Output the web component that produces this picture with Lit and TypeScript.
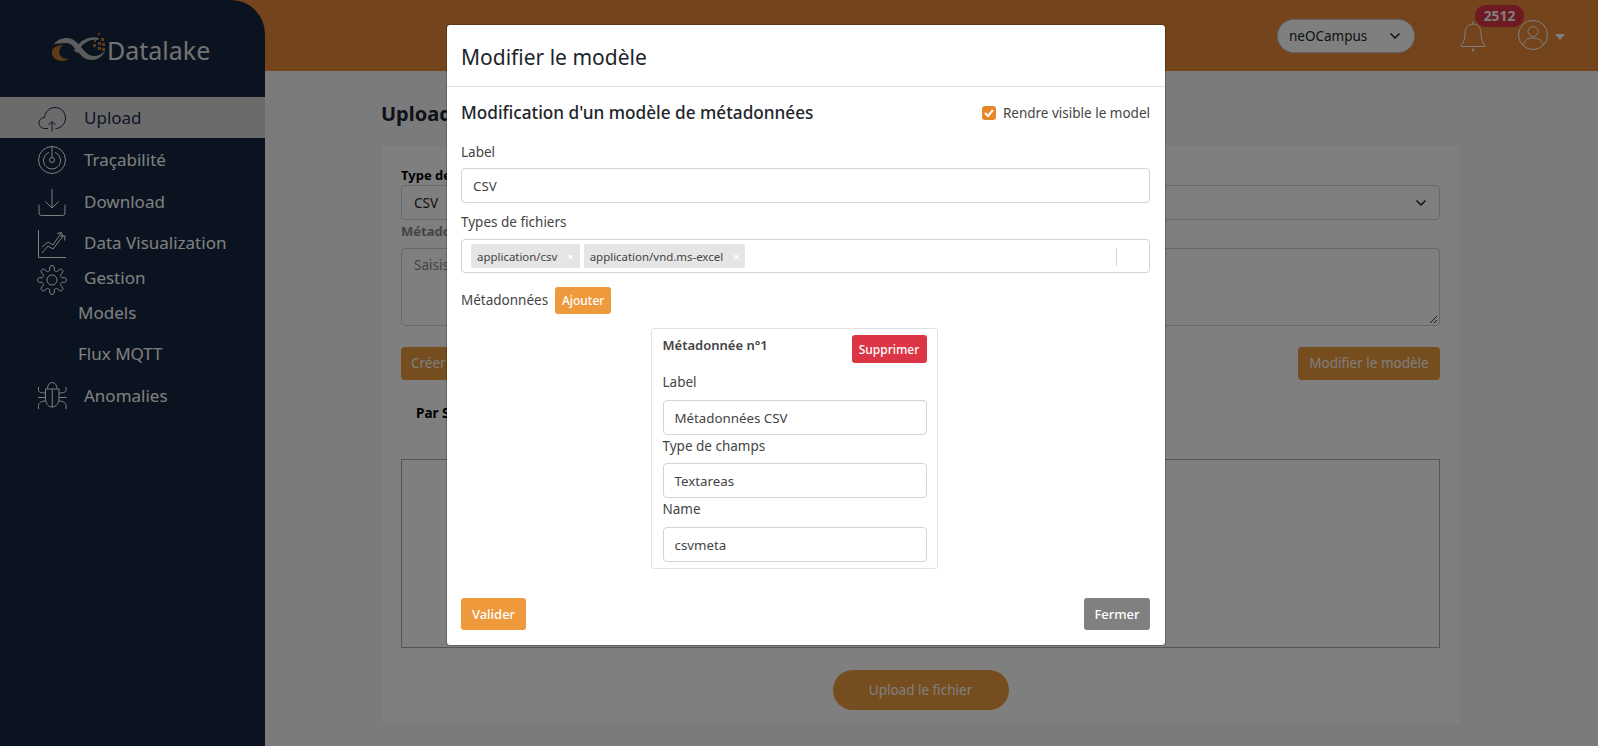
import { LitElement, html, css, svg } from "lit";
import { customElement } from "lit/decorators.js";

function gearPath(cx: number, cy: number, ro: number, ri: number, n: number) {
  const pts: string[] = [];
  for (let i = 0; i < n; i++) {
    const a = (i / n) * Math.PI * 2 - Math.PI / 2;
    const w = (Math.PI * 2) / n;
    const p = (r: number, t: number) =>
      `${(cx + r * Math.cos(t)).toFixed(2)} ${(cy + r * Math.sin(t)).toFixed(2)}`;
    pts.push(`${i ? "L" : "M"}${p(ri, a - w * 0.3)}`);
    pts.push(`L${p(ro, a - w * 0.2)}`);
    pts.push(`A2.5 2.500 0 0 1 ${p(ro, a + w * 0.2)}`);
    pts.push(`L${p(ri, a + w * 0.3)}`);
    pts.push(`A2 2 0 0 0 ${p(ri, a + w * 0.7)}`);
  }
  return pts.join(" ") + "Z";
}

const icons: Record<string, unknown> = {
  upload: svg`<path d="M7 24.500H6.500A5.500 5.500 0 0 1 1 19a5.500 5.500 0 0 1 5.500-5.500c.4-5.500 5-10 10.500-10 6 0 10.500 4.800 10.500 10.500S23 24.500 17.500 24.500"/><path d="M14 27.500V18M10.500 21l3.500-3.500 3.500 3.500"/><path d="M7 24.500h3"/>`,
  radar: svg`<circle cx="14" cy="14" r="13.500"/><path d="M11 6.500a8.500 8.500 0 1 0 6 0"/><circle cx="14" cy="14" r="2.500"/><path d="M14 .5V11.500"/>`,
  download: svg`<path d="M1 16.500V25a2.500 2.500 0 0 0 2.500 2.500h21A2.500 2.500 0 0 0 27 25v-8.500"/><path d="M14 1V20M7.500 13.500 14 20l6.500-6.500"/>`,
  chart: svg`<path d="M.5 0V27.500H28"/><path d="M4 23l6-7 5 3 10-13"/><path d="M4 17l6-5 5 3 8-12"/><path d="M19 3.500 23.500 2.500 25 7M22 6h5l-.5 4.500"/>`,
  gear: svg`<path d="${gearPath(14, 14, 13.5, 10.2, 8)}"/><circle cx="14" cy="14" r="5"/>`,
  bug: svg`<path d="M9.500 6.500a4.750 6 0 0 1 9.500 0"/><path d="M7.500 7h13.500v9c0 5.500-3 9-6.750 9S7.500 21.500 7.500 16z"/><path d="M14.250 7V25"/><path d="M.5 5v3c0 2 2 3 7 3M28 5v3c0 2-2 3-7 3M0 15.500h7.500M28.500 15.500H21M.5 27v-3.500c0-2.500 3-4.500 7-4.500M28 27v-3.500c0-2.500-3-4.500-7-4.500"/>`,
};

const nav = [
  { t: "Upload", i: "upload", h: 41, on: true },
  { t: "Traçabilité", i: "radar", h: 43 },
  { t: "Download", i: "download", h: 41 },
  { t: "Data Visualization", i: "chart", h: 41, k: "low1" },
  { t: "Gestion", i: "gear", h: 29, k: "low2" },
  { t: "Models", h: 41, sub: true },
  { t: "Flux MQTT", h: 42, sub: true },
  { t: "Anomalies", i: "bug", h: 42 },
];

const chev = html`<svg class="chev" viewBox="0 0 12 8"><path d="M1.500 1.500 6 6l4.500-4.500"/></svg>`;

@customElement("app-root")
export class AppRoot extends LitElement {
  static styles = css`
    :host {
      display: block;
      width: 1598px;
      height: 746px;
      position: relative;
      overflow: hidden;
      font-family: "Noto Sans", "Open Sans", sans-serif;
      background: #f6f6f6;
      color: #212529;
    }
    * { box-sizing: border-box; }
    .app { display: flex; height: 746px; }
    .sidecol { width: 265px; flex: none; background: #e8883a; }
    .side {
      height: 100%;
      background: #14263f;
      border-top-right-radius: 34px;
      color: #fff;
      padding-top: 28px;
    }
    .logo { display: flex; align-items: center; height: 40px; padding-left: 48px; margin-bottom: 29px; }
    .logo svg { width: 58px; height: 40px; flex: none; }
    .logo span { font-size: 25px; color: #e4e4e4; line-height: 39px; margin: 4px 0 0 1px; }
    .nav { display: flex; flex-direction: column; }
    .row { display: flex; align-items: center; padding-left: 38px; font-size: 17px; color: #fff; }
    .row span { margin-bottom: 1px; }
    .row.on { background: #d6d6d6; color: #1b2c4d; }
    .row.sub { padding-left: 78px; }
    .row svg { width: 28px; height: 28px; flex: none; margin-right: 18px; fill: none; stroke: currentColor; stroke-width: 1; overflow: visible; }
    .row.low1 svg { margin-top: 3px; }
    .row.low2 svg { margin-top: 4px; }
    .main { flex: 1; display: flex; flex-direction: column; min-width: 0; }
    .top {
      height: 71px;
      background: #e8883a;
      flex: none;
      display: flex;
      align-items: center;
      justify-content: flex-end;
      padding-right: 33px;
    }
    .org {
      width: 138px;
      height: 34px;
      border-radius: 17px;
      border: 1px solid #c8c8c8;
      background: #fff;
      display: flex;
      align-items: center;
      justify-content: space-between;
      padding: 0 13px 0 11px;
      font-size: 13.500px;
      color: #212529;
      margin-right: 45px;
    }
    .chev { width: 12px; height: 8px; fill: none; stroke: #212529; stroke-width: 1.500; flex: none; }
    .bell { position: relative; width: 26px; height: 34px; margin-right: 32px; }
    .bell svg { width: 26px; height: 34px; fill: none; stroke: #fff; stroke-width: 1; display: block; }
    .badge {
      position: absolute;
      left: 15px;
      top: -14px;
      width: 49px;
      height: 22px;
      border-radius: 11px;
      background: #dc3545;
      color: #fff;
      font-size: 13.800px;
      font-weight: 700;
      text-align: center;
      line-height: 21px;
    }
    .user { display: flex; align-items: center; gap: 7px; margin-top: -2px; }
    .user svg { width: 30px; height: 30px; fill: none; stroke: #fff; stroke-width: 1; }
    .caret { width: 0; height: 0; border: 5px solid transparent; border-top: 6px solid #fff; border-bottom: 0; margin-top: 5px; }
    .content { flex: 1; padding: 29px 138px 22px 117px; display: flex; flex-direction: column; }
    h1 { margin: 0 0 19px -1px; font-size: 20px; font-weight: 700; line-height: 27px; height: 27px; color: #1a2233; }
    .panel { background: #fff; flex: 1; padding: 20px 20px 0 19px; display: flex; flex-direction: column; }
    .flabel { font-size: 13px; font-weight: 700; line-height: 18px; height: 18px; color: #000; margin-bottom: 1px; }
    .flabel.muted { color: #888; margin: 2px 0 0; height: 18px; }
    .sel {
      height: 35px;
      border: 1px solid #ced4da;
      border-radius: 4px;
      display: flex;
      align-items: center;
      justify-content: space-between;
      padding: 0 12px;
      font-size: 13.500px;
      flex: none;
    }
    .ta {
      height: 78px;
      flex: none;
      border: 1px solid #ced4da;
      border-radius: 4px;
      margin-top: 8px;
      padding: 7px 12px;
      font-size: 13.500px;
      color: #888;
      position: relative;
    }
    .grip { position: absolute; right: 1px; bottom: 1px; width: 9px; height: 9px; fill: none; stroke: #333; stroke-width: 1; }
    .acts { display: flex; justify-content: space-between; margin-top: 21px; }
    .pbtn { height: 33px; padding: 0 10px; background: #ea9a3c; color: #fff; border-radius: 4px; font-size: 13.500px; line-height: 33px; }
    .pbtn.right { width: 142px; text-align: center; padding: 0; }
    .par { font-size: 13.500px; font-weight: 700; color: #000; margin: 24px 0 0 15px; line-height: 18px; height: 18px; }
    .drop { height: 189px; border: 1px solid #aaa; margin-top: 37px; flex: none; }
    .send { align-self: center; margin-top: 22px; width: 176px; height: 40px; border-radius: 20px; background: #ea9a3c; color: #fff; font-size: 13.500px; text-align: center; line-height: 40px; }
    .overlay { position: absolute; inset: 0; background: rgba(0, 0, 0, 0.5); }
    .modal {
      position: absolute;
      left: 446px;
      top: 24px;
      width: 720px;
      height: 622px;
      background: #fff;
      border: 1px solid rgba(0, 0, 0, 0.2);
      border-radius: 4px;
      background-clip: padding-box;
      display: flex;
      flex-direction: column;
    }
    .mhead { height: 62px; flex: none; border-bottom: 1px solid #dee2e6; display: flex; align-items: center; padding: 2px 14px 0; font-size: 21px; line-height: 30px; font-weight: 400; }
    .mbody { padding: 0 15px 0 14px; flex: 1; display: flex; flex-direction: column; }
    .mtitle { display: flex; align-items: center; justify-content: space-between; height: 51px; flex: none; }
    .mtitle b { font-size: 17.200px; font-weight: 500; }
    .chk { display: flex; align-items: center; gap: 7px; font-size: 13.500px; color: #444; }
    .box { width: 14px; height: 14px; border-radius: 3px; background: #e8872a; display: flex; }
    .box svg { width: 14px; height: 14px; fill: none; stroke: #fff; stroke-width: 2; }
    .lab { font-size: 13.500px; line-height: 18px; color: #444; height: 18px; }
    .inp {
      border: 1px solid #ced4da;
      border-radius: 4px;
      height: 35px;
      display: flex;
      align-items: center;
      padding: 0 11px;
      font-size: 13.300px;
      color: #444;
      background: #fff;
      flex: none;
    }
    .inp.mt { margin-top: 7px; }
    .gap1 { margin-top: 10px; }
    .tags { padding: 0 9px; gap: 4px; position: relative; margin-top: 8px; height: 34px; }
    .tag { height: 24px; background: #e5e5e5; display: flex; align-items: center; padding: 0 6px; font-size: 11.450px; color: #444; border-radius: 2px; gap: 10px; }
    .tag i { font-style: normal; color: #fff; font-size: 11px; font-weight: 700; }
    .sep { position: absolute; left: 654px; top: 8px; width: 1px; height: 18px; background: #ced4da; }
    .mrow { display: flex; align-items: center; gap: 7px; margin-top: 13px; height: 28px; flex: none; }
    .bt { color: #fff; border-radius: 3px; font-size: 12px; font-weight: 500; display: flex; align-items: center; justify-content: center; }
    .add { width: 56px; height: 27px; background: #ee9a3c; }
    .card {
      align-self: center;
      width: 287px;
      height: 241px;
      flex: none;
      margin: 14px 23px 0 0;
      border: 1px solid #dee2e6;
      border-radius: 3px;
      padding: 6px 10px 0 11px;
      display: flex;
      flex-direction: column;
    }
    .chead { display: flex; justify-content: space-between; height: 36px; flex: none; }
    .chead b { font-size: 13px; font-weight: 600; line-height: 18px; margin-top: 1px; color: #444; }
    .del { width: 75px; height: 28px; background: #dc3545; }
    .clab { margin-top: 2px; }
    .clab2 { margin-top: 2px; }
    .card .inp { height: 35px; margin-top: 8px; }
    .card .inp.first, .card .inp.last { margin-top: 9px; }
    .mfoot { display: flex; justify-content: space-between; margin-top: 29px; }
    .mfoot .bt { height: 32px; font-size: 13px; }
    .val { width: 65px; background: #ee9a3c; }
    .clo { width: 66px; background: #808080; }
  `;

  render() {
    return html`
      <div class="app">
        <div class="sidecol">
          <aside class="side">
            <div class="logo">
              <svg viewBox="0 0 58 40">
                <path d="M4 23c-1 6 4 10 10 10 3 0 5-1 7-2-4 0-7-1-9-4-2-3 0-8 3-10-5 0-10 2-11 6z" fill="#b9772c"/>
                <path d="M6 16c3-4 8-6 13-6 6 0 10 4 14 9 4 5 8 9 13 9 4 0 8-2 11-5-2 5-7 9-13 9-6 0-10-3-14-8-4-5-7-9-12-9-5 0-9 1-12 1z" fill="#b8b8b8"/>
                <path d="M26 22c3-5 8-10 14-12 4-1 8-1 11 0l-1 2c-5-1-9 0-13 3-3 2-6 6-8 10z" fill="#b8b8b8"/>
                <g fill="#b9772c">
                  <rect x="50" y="5" width="2" height="2"/><rect x="46" y="12" width="2" height="2"/><rect x="53" y="10" width="3" height="3"/>
                  <rect x="50" y="14" width="3" height="3"/><rect x="45" y="16" width="3" height="3"/><rect x="54" y="15" width="3" height="3"/>
                  <rect x="50" y="19" width="3" height="3"/><rect x="54" y="20" width="3" height="3"/>
                </g>
              </svg>
              <span>Datalake</span>
            </div>
            <nav class="nav">
              ${nav.map(
                (n) => html`<div class="row ${n.on ? "on" : ""} ${n.sub ? "sub" : ""} ${n.k ?? ""}" style="height:${n.h}px">
                  ${n.i ? html`<svg viewBox="0 0 28 28">${icons[n.i]}</svg>` : ""}<span>${n.t}</span>
                </div>`
              )}
            </nav>
          </aside>
        </div>
        <div class="main">
          <header class="top">
            <div class="org"><span>neOCampus</span>${chev}</div>
            <div class="bell">
              <svg viewBox="0 0 26 34"><path d="M13 5c-5 0-8 4-8 9 0 6-1 9-4 12.500-.3.500 0 1 .5 1h23c.5 0 .8-.5.5-1C22 23 21 20 21 14c0-5-3-9-8-9zM13 5V2"/><circle cx="13" cy="31" r="1" fill="#fff"/></svg>
              <div class="badge">2512</div>
            </div>
            <div class="user">
              <svg viewBox="0 0 30 30"><circle cx="15" cy="15" r="14.500"/><circle cx="15" cy="11.500" r="5"/><path d="M5 25c1-5 5-7 10-7s9 2 10 7"/></svg>
              <div class="caret"></div>
            </div>
          </header>
          <div class="content">
            <h1>Upload</h1>
            <div class="panel">
              <div class="flabel">Type de fichier</div>
              <div class="sel"><span>CSV</span>${chev}</div>
              <div class="flabel muted">Métadonnées</div>
              <div class="ta">Saisissez
                <svg class="grip" viewBox="0 0 9 9"><path d="M1 8 8 1M5 8 8 5"/></svg>
              </div>
              <div class="acts"><div class="pbtn">Créer un modèle</div><div class="pbtn right">Modifier le modèle</div></div>
              <div class="par">Par Sélection</div>
              <div class="drop"></div>
              <div class="send">Upload le fichier</div>
            </div>
          </div>
        </div>
      </div>
      <div class="overlay"></div>
      <div class="modal">
        <div class="mhead">Modifier le modèle</div>
        <div class="mbody">
          <div class="mtitle">
            <b>Modification d'un modèle de métadonnées</b>
            <div class="chk">
              <span class="box"><svg viewBox="0 0 14 14"><path d="M3 7l3 3 5-6"/></svg></span>
              Rendre visible le model
            </div>
          </div>
          <div class="lab" style="margin-top:5px">Label</div>
          <div class="inp mt">CSV</div>
          <div class="lab gap1">Types de fichiers</div>
          <div class="inp tags">
            <div class="tag">application/csv<i>×</i></div>
            <div class="tag">application/vnd.ms-excel<i>×</i></div>
            <div class="sep"></div>
          </div>
          <div class="mrow"><span class="lab">Métadonnées</span><div class="bt add">Ajouter</div></div>
          <div class="card">
            <div class="chead"><b>Métadonnée n°1</b><div class="bt del">Supprimer</div></div>
            <div class="lab clab">Label</div>
            <div class="inp first">Métadonnées CSV</div>
            <div class="lab clab2">Type de champs</div>
            <div class="inp">Textareas</div>
            <div class="lab clab2">Name</div>
            <div class="inp last">csvmeta</div>
          </div>
          <div class="mfoot"><div class="bt val">Valider</div><div class="bt clo">Fermer</div></div>
        </div>
      </div>
    `;
  }
}
